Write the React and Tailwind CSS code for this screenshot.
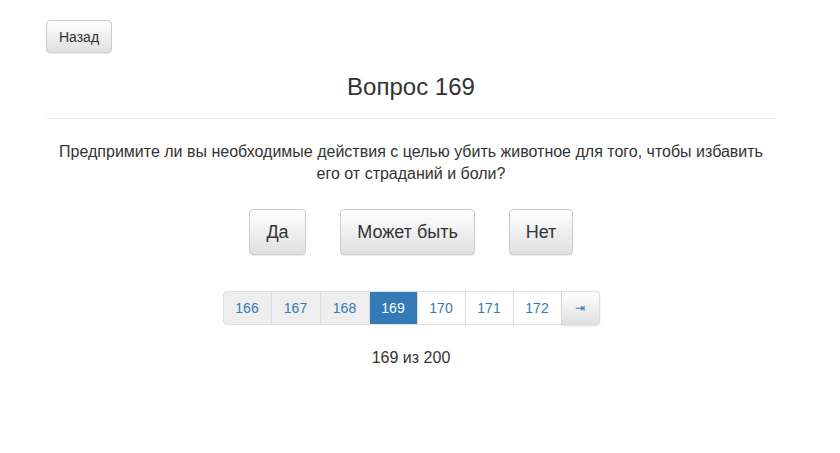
import React from 'react';

const font = { fontFamily: '"Liberation Sans", Arial, sans-serif' };

const Btn = ({ children, className = '' }) => (
    <button className={`border border-[#ccc] rounded-[4px] text-[#333] bg-gradient-to-b from-white to-[#e0e0e0] shadow-[inset_0_1px_0_rgba(255,255,255,0.15),0_1px_1px_rgba(0,0,0,0.075)] ${className}`}>
        {children}
    </button>
);

const Page = ({ label, state }) => {
    const base = 'h-[34px] flex items-center justify-center text-sm border-y border-r border-[#ddd]';
    if (state === 'active') return <span className={`${base} w-[48px] bg-[#337ab7] border-[#337ab7] text-white`}>{label}</span>;
    if (state === 'seen') return <span className={`${base} w-[49px] bg-[#eee] text-[#337ab7]`}>{label}</span>;
    return <span className={`${base} w-[48px] bg-white text-[#337ab7]`}>{label}</span>;
};

export default function App() {
    return (
        <div className="w-[840px] h-[453px] bg-white text-[#333]" style={font}>
            <div className="ml-[46px] w-[730px] pt-5">
                <Btn className="h-[33px] w-[66px] text-sm">Назад</Btn>
                <h1 className="text-center text-[24px] leading-[26px] mt-[21px]">Вопрос 169</h1>
                <hr className="mt-[18px] border-t border-[#eee]" />
                <p className="text-center text-[16px] leading-[22px] mt-[22px] px-[10px]">
                    Предпримите ли вы необходимые действия с целью убить животное для того, чтобы избавить его от страданий и боли?
                </p>
                <div className="flex justify-center gap-[34px] mt-[24px]">
                    <Btn className="h-[46px] w-[57px] text-[18px]">Да</Btn>
                    <Btn className="h-[46px] w-[135px] text-[18px]">Может быть</Btn>
                    <Btn className="h-[46px] w-[64px] text-[18px]">Нет</Btn>
                </div>
                <div className="flex justify-center mt-[36px]">
                    <div className="flex">
                        <span className="h-[34px] w-[49px] flex items-center justify-center text-sm border border-[#ddd] rounded-l-[4px] bg-[#eee] text-[#337ab7]">166</span>
                        <Page label="167" state="seen" />
                        <Page label="168" state="seen" />
                        <Page label="169" state="active" />
                        <Page label="170" />
                        <Page label="171" />
                        <Page label="172" />
                        <span className="h-[34px] w-[38px] flex items-center justify-center text-[12px] text-[#337ab7] border-y border-r border-[#ddd] rounded-r-[4px] bg-gradient-to-b from-white to-[#e0e0e0] shadow-[0_1px_2px_rgba(0,0,0,0.15)]">⇥</span>
                    </div>
                </div>
                <p className="text-center text-[16px] mt-[21px]">169 из 200</p>
            </div>
        </div>
    );
}
